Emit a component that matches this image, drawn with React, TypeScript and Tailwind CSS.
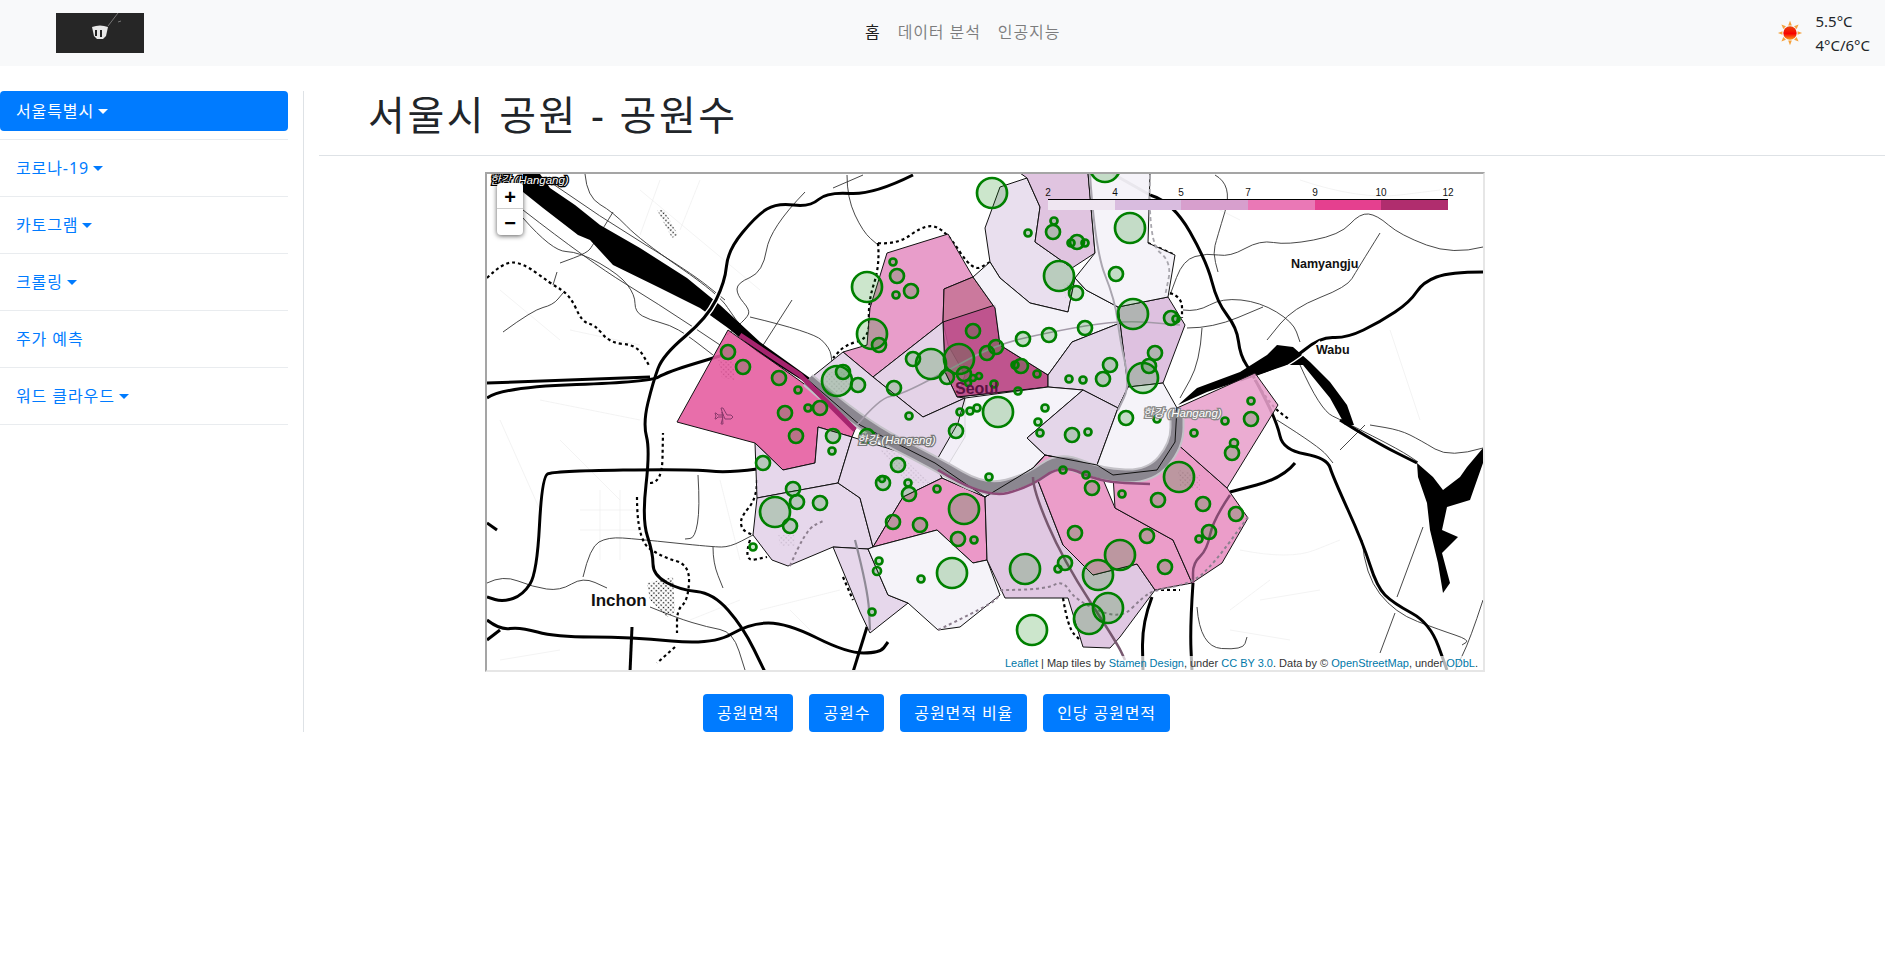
const FONT = { fontFamily: '"Noto Sans", "Noto Sans CJK KR", sans-serif' };

const sideItems = ["코로나-19", "카토그램", "크롤링", "주가 예측", "워드 클라우드"];
const buttons = ["공원면적", "공원수", "공원면적 비율", "인당 공원면적"];

// district polygons, page coordinates
const districts: [string, string][] = [
  ["#e58fc3", "887,253 948,234 973,277 944,289 943,322 873,377 843,352 867,345 870,308"],
  ["#c4668f", "973,277 944,289 943,322 948,345 965,375 957,397 1048,387 1048,375 1000,345 995,308"],
  ["#bd4f8c", "943,322 995,305 1000,345 1048,375 1048,387 957,397 945,372"],
  ["#e0cce4", "943,322 873,377 923,417 965,398 957,397 945,372"],
  ["#e0d0e6", "843,352 808,380 860,425 930,465 945,470 965,437 965,398 923,417 873,377"],
  ["#e55a9e", "728,330 677,422 755,443 783,470 815,463 818,427 852,437 858,422"],
  ["#e2d2e8", "755,443 783,470 815,463 818,427 852,437 838,483 757,498"],
  ["#e2d2e8", "757,498 838,483 860,498 873,547 868,549 833,547 788,566 772,560 753,535"],
  ["#e2d2e8", "852,437 838,483 860,498 873,547 903,497 942,478 935,463"],
  ["#e88ac0", "873,547 903,497 942,478 985,497 987,560 973,563 937,530"],
  ["#e2d2e8", "833,547 868,549 888,595 908,603 870,633 860,612"],
  ["#f4f1f8", "868,549 873,547 937,530 973,563 987,560 1000,595 960,627 938,630 908,603 888,595"],
  ["#dcc0de", "985,497 1033,468 1063,545 1093,575 1137,564 1155,590 1120,637 1110,648 1083,647 1068,598 1005,598 987,560"],
  ["#e88fc2", "1033,468 1045,455 1097,465 1115,508 1173,540 1192,583 1155,590 1137,564 1093,575 1063,545"],
  ["#e88fc2", "1115,508 1113,475 1157,470 1175,442 1227,488 1248,518 1222,563 1192,583 1173,540"],
  ["#e8a0cc", "1177,408 1255,373 1278,405 1227,488 1175,442"],
  ["#d9b8dc", "1118,307 1168,297 1185,325 1163,383 1128,387 1120,323"],
  ["#e6dbec", "990,262 985,228 1000,187 1027,178 1040,207 1035,242 1072,268 1075,278 1068,312 1030,303 1000,278"],
  ["#f3f0f7", "973,277 990,262 1000,278 1030,303 1068,312 1075,278 1086,290 1118,307 1120,323 1072,342 1048,375 1000,345 995,308"],
  ["#dcbcdc", "1027,178 1040,207 1035,242 1072,268 1095,253 1088,173 1020,173"],
  ["#f4f1f8", "1088,173 1150,173 1148,243 1175,255 1168,297 1118,307 1086,290 1075,278 1095,253"],
  ["#e0d0e6", "1120,323 1072,342 1048,375 1048,387 1083,390 1118,408 1128,387"],
  ["#f4f1f8", "965,398 1048,387 1083,390 1027,438 1045,455 1033,468 985,497 942,478 935,463 958,423"],
  ["#e0d0e6", "1083,390 1118,408 1097,465 1045,455 1027,438"],
  ["#f4f1f8", "1118,408 1128,387 1163,383 1177,408 1175,442 1157,470 1113,475 1097,465"],
];

const highways = [
  "913,175 873,195 827,192 810,207 777,203 757,215 728,250 725,282 707,318 663,355 653,382 643,423 650,450 642,520 653,553 653,575 680,590 713,593 743,627 765,672",
  "487,398 503,387 650,382 667,372 723,355",
  "487,383 650,377",
  "757,469 727,473 693,469 553,471 542,477 537,573 523,595 503,602 487,597",
  "487,620 500,630 520,627 555,637 630,637 713,645 750,623 787,623 847,653 880,653 888,642",
  "487,640 500,630",
  "632,627 630,672",
  "867,627 853,672",
  "487,523 497,530",
  "1150,195 1173,202 1207,262 1217,302 1237,328 1240,355 1253,375 1277,422 1283,450 1327,458 1333,477 1363,543 1377,587 1393,603 1430,623 1447,670",
  "1295,463 1283,478 1230,492",
  "1193,583 1190,627 1192,672",
  "1152,597 1142,623 1143,672",
];

const thinRoads = [
  "585,174 587,197 613,212 640,240 720,295 735,320 760,345",
  "523,218 552,251 580,252 620,275 635,295 635,312 650,320 670,325 687,335 713,355",
  "503,332 533,310 553,305 563,293",
  "557,272 553,285",
  "613,212 593,245 587,253 560,263",
  "847,175 847,198 863,232 878,245",
  "863,175 833,188",
  "805,192 770,228 763,272 737,283 737,295 750,310 747,318 727,335",
  "792,300 760,350",
  "750,317 813,332 830,348 832,362",
  "553,184 600,217 690,272 725,300",
  "523,210 590,262 660,305 720,345",
  "1380,233 1357,270 1347,287 1293,308 1267,340",
  "1215,175 1233,185 1217,238 1213,253 1218,272",
  "1483,247 1453,255 1400,235 1377,215 1360,213 1340,235 1287,245 1260,240 1230,257 1207,253 1183,260 1170,295",
  "1183,310 1197,312 1222,298 1260,302 1293,322 1300,342",
  "1187,328 1213,328 1263,307",
  "1202,328 1200,362 1180,398",
  "1277,420 1320,447 1333,463",
  "1395,613 1380,653",
  "1423,527 1397,597",
  "1197,607 1200,647 1243,650 1247,637",
  "1340,450 1365,425",
  "1300,365 1320,410 1345,422 1400,450 1418,462",
  "1362,540 1365,575 1395,613 1440,630 1470,640 1462,645",
  "487,583 503,575 533,587 560,591 583,577 607,588",
  "583,577 590,547 608,537 637,539 713,547 730,547 753,535",
  "713,547 713,563 723,588",
  "698,475 700,508 695,538 685,539",
  "650,607 677,618 707,627 733,632 745,670",
  "1483,448 1450,458 1420,440 1400,430 1370,425",
  "1483,600 1470,640 1455,670",
];

const faintRoads = [
  "640,190 700,240 760,290", "660,180 640,235", "700,180 680,230", "540,400 640,420", "560,440 620,500",
  "500,420 540,510", "600,490 600,560", "620,490 620,560", "580,510 640,510", "580,530 640,530",
  "720,480 740,560", "760,610 840,590", "1240,550 1290,560 1340,540", "1260,600 1320,590", "1390,330 1420,420",
  "1230,610 1270,580", "1230,630 1290,640", "1300,180 1360,200 1440,190", "1200,200 1240,220", "690,620 740,600",
  "500,660 560,650", "500,290 560,340", "570,330 640,345", "790,610 830,650",
];

const dotted = [
  "487,278 503,262 523,263 550,283 570,295 582,322 595,325 610,343 637,345 650,367",
  "878,243 880,265 868,302 870,338 845,345 833,358",
  "878,243 897,245 927,223 947,232 973,272 990,262",
  "1170,293 1182,297 1182,318",
  "1148,243 1175,255",
  "757,480 757,498 740,518 742,530 753,535",
  "750,540 743,562 767,557",
  "637,497 637,540 662,557 690,565 688,600 677,610 677,633",
  "675,647 657,663",
  "650,483 662,483 663,433",
  "843,577 853,600",
  "1255,380 1270,405 1290,420",
  "1063,598 1068,628 1080,640",
  "1155,590 1180,590",
];

const grayDotted = [
  "1000,590 1045,590 1063,580 1075,600 1120,620 1143,597 1155,590 1193,583 1215,562 1248,517",
  "790,566 805,530 825,520",
  "938,630 990,605 1000,595",
];

const circles: [number, number, number][] = [
  [992, 193, 15], [867, 287, 15], [897, 276, 7], [893, 262, 3.5], [911, 291, 7], [896, 295, 3.5], [872, 334, 15], [879, 345, 7],
  [728, 352, 7], [743, 367, 7], [779, 378, 7], [798, 390, 3.5], [837, 381, 15], [843, 372, 7], [858, 385, 7], [894, 388, 7],
  [909, 416, 3.5], [913, 359, 7], [931, 364, 15], [947, 377, 7], [959, 359, 15], [973, 331, 7], [987, 353, 7], [996, 347, 7],
  [964, 374, 7], [973, 378, 3], [979, 376, 3], [968, 383, 3], [994, 384, 3.5], [960, 412, 3.5], [970, 411, 3.5], [977, 408, 3.5],
  [998, 412, 15], [820, 408, 7], [808, 408, 3.5], [785, 413, 7], [1105, 167, 15], [1054, 221, 3.5], [1053, 232, 7], [1028, 233, 3.5],
  [1077, 242, 7], [1071, 243, 3.5], [1085, 243, 3.5], [1130, 228, 15], [1059, 276, 15], [1076, 293, 7], [1116, 274, 7], [1133, 314, 15],
  [1171, 318, 7], [1176, 319, 3.5], [1085, 328, 7], [1049, 335, 7], [1023, 339, 7], [1021, 366, 7], [1015, 365, 3.5], [1037, 374, 3.5],
  [1018, 391, 3.5], [1045, 408, 3.5], [1038, 422, 3.5], [1069, 379, 3.5], [1083, 380, 3.5], [1103, 379, 7], [1110, 365, 7], [1143, 378, 15],
  [1149, 366, 7], [1155, 353, 7], [1126, 418, 7], [1157, 419, 3.5], [1251, 401, 3.5], [1251, 419, 7], [1225, 421, 3.5], [796, 436, 7],
  [833, 436, 7], [832, 451, 3.5], [763, 463, 7], [867, 436, 7], [956, 431, 7], [898, 465, 7], [883, 483, 7], [882, 479, 3],
  [908, 483, 3.5], [909, 494, 7], [937, 489, 3.5], [989, 477, 3.5], [793, 489, 7], [797, 502, 7], [820, 503, 7], [775, 512, 15],
  [790, 526, 7], [753, 547, 3.5], [893, 522, 7], [920, 525, 7], [964, 509, 15], [958, 539, 7], [974, 540, 3.5], [879, 561, 3.5],
  [877, 571, 4], [921, 579, 3.5], [952, 573, 15], [872, 612, 3.5], [1040, 433, 3.5], [1072, 435, 7], [1088, 432, 3.5], [1194, 433, 3.5],
  [1234, 443, 4], [1232, 453, 7], [1179, 477, 15], [1063, 470, 3.5], [1086, 475, 3.5], [1092, 488, 7], [1122, 494, 3.5], [1158, 500, 7],
  [1203, 504, 7], [1236, 514, 7], [1209, 532, 7], [1199, 539, 3.5], [1075, 533, 7], [1147, 536, 7], [1120, 555, 15], [1165, 567, 7],
  [1098, 575, 15], [1065, 563, 7], [1058, 569, 3.5], [1025, 569, 15], [1108, 608, 15], [1089, 619, 15], [1032, 630, 15],
];

const legend: [number, number, string][] = [
  [1048, 67, "#efe6f1"], [1115, 66, "#d9bcdf"], [1181, 67, "#d79fcd"], [1248, 67, "#ea78b6"], [1315, 66, "#e5408f"], [1381, 67, "#b02d6e"],
];

// round the corners of a road so it doesn't read as straight segments
function smooth(points: string) {
  const p = points.split(" ").map((s) => s.split(",").map(Number));
  let d = `M${p[0][0]} ${p[0][1]}`;
  for (let i = 1; i < p.length - 1; i++) {
    const mx = (p[i][0] + p[i + 1][0]) / 2;
    const my = (p[i][1] + p[i + 1][1]) / 2;
    d += ` Q${p[i][0]} ${p[i][1]} ${mx} ${my}`;
  }
  const last = p[p.length - 1];
  return `${d} L${last[0]} ${last[1]}`;
}

const HAN_SEOUL = "808,380 860,425 935,463 985,492 1030,480 1060,458 1100,475 1150,477 1177,445 1177,410";

function SeoulMap() {
  return (
    <svg viewBox="487 174 996 496" className="block h-[496px] w-[996px]" fontFamily='"Liberation Sans", sans-serif'>
      <defs>
        <pattern id="dots" width="3.4" height="3.4" patternUnits="userSpaceOnUse" patternTransform="rotate(45)">
          <circle cx="1.2" cy="1.2" r="0.8" fill="#111" />
        </pattern>
        <clipPath id="frame">
          <rect x="487" y="174" width="996" height="496" />
        </clipPath>
      </defs>
      <g clipPath="url(#frame)">
        <rect x="487" y="174" width="996" height="496" fill="#fff" />
        {faintRoads.map((p) => (
          <path key={p} d={smooth(p)} fill="none" stroke="#eeeeee" strokeWidth="0.7" />
        ))}
        {thinRoads.map((p) => (
          <path key={p} d={smooth(p)} fill="none" stroke="#333" strokeWidth="0.9" />
        ))}

        {/* hatched built-up patches */}
        <polygon points="657,210 664,210 678,235 672,238" fill="url(#dots)" />
        <polygon points="647,583 673,577 675,612 667,617 650,600" fill="url(#dots)" />
        <polygon points="718,360 733,360 735,380 722,378" fill="url(#dots)" />
        <polygon points="778,535 795,535 795,546 780,546" fill="url(#dots)" />
        <polygon points="880,450 895,450 930,483 905,483" fill="url(#dots)" />
        <polygon points="1178,470 1200,475 1200,490 1180,486" fill="url(#dots)" />
        <polygon points="1063,284 1072,282 1072,298 1065,298" fill="url(#dots)" />
        <polygon points="825,372 850,372 850,392 825,392" fill="url(#dots)" />

        {/* Han river, west and east, and the reservoir */}
        <polygon
          points="523,174 540,174 550,188 575,205 600,225 640,248 687,278 720,305 760,342 810,378 808,384 757,352 728,328 700,308 660,288 613,265 590,240 578,235 543,208 523,192"
          fill="#000"
        />
        <polygon
          points="1178,405 1197,388 1240,372 1267,355 1277,345 1293,347 1310,362 1330,382 1347,405 1354,425 1345,425 1330,398 1303,365 1287,365 1257,375 1207,392"
          fill="#000"
        />
        <path d={smooth("1340,420 1375,442 1417,463")} fill="none" stroke="#000" strokeWidth="3" />
        <polygon
          points="1417,463 1433,477 1443,490 1460,477 1467,467 1483,448 1483,463 1470,500 1447,507 1442,530 1458,537 1442,553 1450,583 1443,593 1438,563 1430,530 1427,503 1418,477"
          fill="#000"
        />

        {/* white casing where roads cross the river */}
        <path d={smooth("728,250 725,282 707,318 663,355")} fill="none" stroke="#fff" strokeWidth="6" />
        <path d={smooth("650,382 667,372 723,355")} fill="none" stroke="#fff" strokeWidth="6" />
        {highways.map((p) => (
          <path key={p} d={smooth(p)} fill="none" stroke="#000" strokeWidth="3" strokeLinejoin="round" />
        ))}
        <path d={smooth("1483,272 1450,272 1423,282 1410,302 1380,322 1347,338 1320,337 1290,362 1240,380")} fill="none" stroke="#000" strokeWidth="3" />
        <path d={smooth("1320,341 1292,366 1250,381")} fill="none" stroke="#fff" strokeWidth="1.4" />
        <polyline points="1113,174 1150,195" fill="none" stroke="#999" strokeWidth="3" />
        {dotted.map((p) => (
          <path key={p} d={smooth(p)} fill="none" stroke="#000" strokeWidth="2.2" strokeDasharray="3 3" />
        ))}

        {/* districts */}
        {districts.map(([fill, points]) => (
          <polygon key={points} points={points} fill={fill} fillOpacity="0.88" stroke="#111" strokeWidth="1" />
        ))}

        {/* river and roads seen through the overlay */}
        <path d={smooth(HAN_SEOUL)} fill="none" stroke="#c4c2c8" strokeWidth="15" />
        <path d={smooth(HAN_SEOUL)} fill="none" stroke="#8b8790" strokeWidth="11" />
        <polyline points="808,380 860,425 935,463 985,497 1033,468 1045,455 1097,465 1113,475 1157,470 1175,442 1177,408" fill="none" stroke="#111" strokeWidth="1" />
        <polyline points="740,335 800,375 855,430" fill="none" stroke="#a5246e" strokeWidth="5" />
        <path d={smooth("938,470 985,499 1030,487 1062,464 1100,482 1150,484")} fill="none" stroke="#8d4a78" strokeWidth="2.5" />
        <path d={smooth("1033,477 1033,490 1063,560 1117,643 1125,660")} fill="none" stroke="#77586f" strokeWidth="2.5" />
        <path d={smooth("1230,495 1213,520 1207,550 1193,563 1193,583")} fill="none" stroke="#854a72" strokeWidth="2.5" />
        <path d={smooth("857,425 880,398 900,395 945,372 995,345 1050,332 1120,320 1180,325")} fill="none" stroke="#a39aa8" strokeWidth="1.6" />
        <path d={smooth("1090,174 1095,250 1115,300 1120,340 1130,385 1118,410")} fill="none" stroke="#aaa6b0" strokeWidth="2" />
        <path d={smooth("1150,175 1148,243 1172,262 1165,296")} fill="none" stroke="#a8a6ad" strokeWidth="1.8" strokeDasharray="4 3" />
        <path d={smooth("855,540 868,590 870,630")} fill="none" stroke="#8f8a96" strokeWidth="2.2" />
        {grayDotted.map((p) => (
          <path key={p} d={smooth(p)} fill="none" stroke="#8d7f8f" strokeWidth="2" strokeDasharray="3 3" />
        ))}

        <path d="M722 412 l3 7 h6 l2 -2 l-2 -2 h-4 l-4 -7 h-2 l2 7 h-5 l-2 -2 h-1 l1 3 l-1 3 h1 l2 -2 h5 l-2 7 h2 z" fill="none" stroke="#8a3a6c" strokeWidth="1" />

        {circles.map(([cx, cy, r]) => (
          <circle key={`${cx}-${cy}-${r}`} cx={cx} cy={cy} r={r} fill="#008000" fillOpacity="0.2" stroke="#008000" strokeWidth="2.7" />
        ))}

        {/* place labels */}
        <text x="1291" y="268" fontSize="12.5" fontWeight="700" fill="#111">Namyangju</text>
        <text x="1316" y="354" fontSize="12.5" fontWeight="700" fill="#111">Wabu</text>
        <text x="591" y="606" fontSize="17" fontWeight="700" fill="#111">Inchon</text>
        <text x="955" y="394" fontSize="16" fontWeight="700" fill="#5b1242">Seoul</text>
        <text x="490" y="184" fontSize="11.5" fontStyle="italic" fill="#fff" stroke="#000" strokeWidth="2.5" paintOrder="stroke" fontFamily='"Liberation Sans", "Noto Sans CJK KR", sans-serif'>한강 (Hangang)</text>
        <text x="857" y="444" fontSize="11.5" fontStyle="italic" fill="#fff" stroke="#777" strokeWidth="2.5" paintOrder="stroke" fontFamily='"Liberation Sans", "Noto Sans CJK KR", sans-serif'>한강 (Hangang)</text>
        <text x="1143" y="417" fontSize="11.5" fontStyle="italic" fill="#fff" stroke="#888" strokeWidth="2.5" paintOrder="stroke" fontFamily='"Liberation Sans", "Noto Sans CJK KR", sans-serif'>한강 (Hangang)</text>

        {/* legend */}
        {legend.map(([x, w, fill]) => (
          <rect key={x} x={x} y="200" width={w} height="10" fill={fill} />
        ))}
        <line x1="1048" y1="199.5" x2="1448" y2="199.5" stroke="#000" strokeWidth="1" />
        {[
          [1048, "2"], [1115, "4"], [1181, "5"], [1248, "7"], [1315, "9"], [1381, "10"], [1448, "12"],
        ].map(([x, t]) => (
          <text key={t} x={x} y="196" fontSize="10" textAnchor="middle" fill="#111">{t}</text>
        ))}
      </g>
    </svg>
  );
}

function Caret() {
  return <span className="ml-[4px] inline-block border-x-[5px] border-t-[5px] border-x-transparent border-t-current align-[3px]" />;
}

function WeatherIcon() {
  const rays = [0, 45, 90, 135, 180, 225, 270, 315];
  return (
    <svg viewBox="0 0 24 24" className="h-[26px] w-[26px]">
      <defs>
        <linearGradient id="sun" x1="0" y1="0" x2="0" y2="1">
          <stop offset="0" stopColor="#e8470b" />
          <stop offset="0.55" stopColor="#f80000" />
          <stop offset="1" stopColor="#f9a11a" />
        </linearGradient>
      </defs>
      {rays.map((a) => (
        <polygon key={a} points="10.3,5 13.7,5 12,0.8" fill="#f6a23c" transform={`rotate(${a} 12 12)`} />
      ))}
      <circle cx="12" cy="12" r="6.2" fill="url(#sun)" />
    </svg>
  );
}

export default function App() {
  return (
    <div className="min-h-[977px] bg-white text-[#212529]" style={FONT}>
      <nav className="flex h-[66px] items-center bg-[#f8f9fa]">
        <div className="relative ml-[56px] h-10 w-[88px] overflow-hidden bg-[#262626]">
          <svg viewBox="0 0 88 40" className="h-full w-full">
            <path d="M36 14 q8 -3 16 0 l-2 9 l-3 3 h-6 l-3 -3 z" fill="#e8e8e8" />
            <path d="M39 17 l2 0 l0 6 l-2 0 z M44 17 l2 0 l0 7 l-2 0 z" fill="#222" />
            <line x1="52" y1="13" x2="62" y2="0" stroke="#777" strokeWidth="1" />
            <line x1="62" y1="9" x2="65" y2="8" stroke="#777" strokeWidth="1" />
          </svg>
        </div>
        <div className="ml-[721px] flex -translate-y-px items-center gap-[17px] text-[16px] tracking-[0.9px]">
          <a className="text-black/90">홈</a>
          <a className="text-black/50">데이터 분석</a>
          <a className="text-black/50">인공지능</a>
        </div>
        <div className="ml-auto mr-[15px] flex items-center gap-[12px]">
          <WeatherIcon />
          <div className="text-[15px] leading-[24px]">
            <div>5.5°C</div>
            <div>4°C/6°C</div>
          </div>
        </div>
      </nav>

      <div className="mt-[25px] flex">
        <aside className="h-[641px] w-[304px] shrink-0 border-r border-[#dee2e6]">
          <ul className="w-[288px] text-[16px] tracking-[0.9px] text-[#007bff]">
            <li className="h-[49px] border-b border-[#e9ecef]">
              <a className="flex h-10 items-center rounded bg-[#007bff] px-4 text-white">
                서울특별시
                <Caret />
              </a>
            </li>
            {sideItems.map((item) => (
              <li key={item} className="flex h-[57px] items-center border-b border-[#e9ecef] px-4">
                {item}
                {item !== "주가 예측" ? <Caret /> : null}
              </li>
            ))}
          </ul>
        </aside>

        <main className="ml-[15px] flex-1">
          <div className="h-[65px] border-b border-[#dee2e6] pl-[49px] pt-px">
            <h1 className="text-[40px] leading-[46px] tracking-[2.6px]">서울시 공원 - 공원수</h1>
          </div>
          <div className="relative ml-[166px] mt-[16px] h-[500px] w-[1000px] border-2 border-b-[#e6e6e6] border-l-[#a5a5a5] border-r-[#e6e6e6] border-t-[#a5a5a5]">
            <SeoulMap />
            <div className="absolute left-[10px] top-[9px] flex w-[26px] flex-col overflow-hidden rounded bg-white font-['Liberation_Sans'] text-[20px] font-bold leading-[28px] text-black shadow-[0_1px_5px_rgba(0,0,0,0.65)]">
              <div className="h-[26px] border-b border-[#ccc] text-center">+</div>
              <div className="h-[26px] text-center">−</div>
            </div>
            <div className="absolute bottom-0 right-0 bg-white/70 px-[5px] font-['Liberation_Sans'] text-[11px] leading-[14px] text-[#333]">
              <span className="text-[#0078a8]">Leaflet</span> | Map tiles by <span className="text-[#0078a8]">Stamen Design</span>, under{" "}
              <span className="text-[#0078a8]">CC BY 3.0</span>. Data by © <span className="text-[#0078a8]">OpenStreetMap</span>, under{" "}
              <span className="text-[#0078a8]">ODbL</span>.
            </div>
          </div>
          <div className="ml-[384px] mt-[22px] flex gap-4">
            {buttons.map((b) => (
              <button key={b} className="h-[38px] rounded bg-[#007bff] px-[14px] text-[16px] tracking-[0.9px] text-white">
                {b}
              </button>
            ))}
          </div>
        </main>
      </div>
    </div>
  );
}
